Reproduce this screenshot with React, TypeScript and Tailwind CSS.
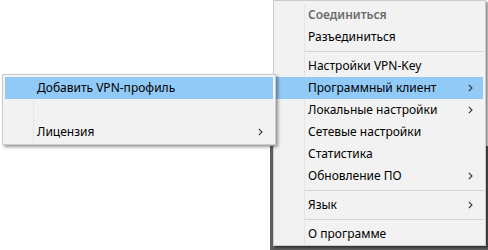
import React from "react";

const Chevron = () => (
  <svg width="5" height="8" viewBox="0 0 5 8" className="block">
    <path d="M0.8 0.8 L4 4 L0.8 7.2" fill="none" stroke="#333" strokeWidth="1.1" />
  </svg>
);

type Item =
  | { kind: "sep" }
  | { kind: "item"; label: string; sub?: boolean; active?: boolean; disabled?: boolean; bold?: boolean };

const mainItems: Item[] = [
  { kind: "item", label: "Соединиться", disabled: true, bold: true },
  { kind: "item", label: "Разъединиться" },
  { kind: "sep" },
  { kind: "item", label: "Настройки VPN-Key" },
  { kind: "item", label: "Программный клиент", sub: true, active: true },
  { kind: "item", label: "Локальные настройки", sub: true },
  { kind: "item", label: "Сетевые настройки" },
  { kind: "item", label: "Статистика" },
  { kind: "item", label: "Обновление ПО", sub: true },
  { kind: "sep" },
  { kind: "item", label: "Язык", sub: true },
  { kind: "sep" },
  { kind: "item", label: "О программе" },
];

const subItems: Item[] = [
  { kind: "item", label: "Добавить VPN-профиль", active: true },
  { kind: "item", label: "" },
  { kind: "item", label: "Лицензия", sub: true },
];

function MenuList({ items }: { items: Item[] }) {
  return (
    <div className="relative flex flex-col">
      <div className="absolute left-[30px] top-0 bottom-0 w-px bg-[#e6e6e6]" />
      {items.map((it, i) =>
        it.kind === "sep" ? (
          <div key={i} className="h-[7px] flex items-center pl-[31px] pr-[1px]">
            <div className="h-px w-full bg-[#d5d5d5]" />
          </div>
        ) : (
          <div
            key={i}
            className={
              "relative h-[22px] mx-[2px] flex items-center pl-[32px] pr-[10px] " +
              (it.active ? "bg-[#91c9f7]" : "")
            }
          >
            <span
              className={
                "flex-1 whitespace-nowrap text-[12px] leading-none " +
                (it.disabled ? "text-[#6d6d6d] " : "text-black ") +
                (it.bold ? "font-semibold" : "")
              }
            >
              {it.label}
            </span>
            {it.sub ? <Chevron /> : null}
          </div>
        )
      )}
    </div>
  );
}

export default function App() {
  return (
    <div
      className="relative w-[488px] h-[250px] bg-white overflow-hidden"
      style={{ fontFamily: '"Noto Sans", "Open Sans", sans-serif' }}
    >
      {/* dark area behind the main menu */}
      <div className="absolute left-[270px] top-[146px] w-[218px] h-[104px] bg-[#5e5e5e]" />
      {/* main menu */}
      <div className="absolute left-[273px] top-0 w-[213px] h-[246px] border border-[#cccccc] bg-[#f2f2f2] pt-[3px] shadow-[2px_2px_2px_rgba(0,0,0,0.45)]">
        <MenuList items={mainItems} />
      </div>
      {/* submenu */}
      <div className="absolute left-[2px] top-[74px] w-[274px] border border-[#cccccc] bg-[#f2f2f2] pt-[2px] pb-[1px] shadow-[2px_2px_3px_rgba(0,0,0,0.4)]">
        <MenuList items={subItems} />
      </div>
    </div>
  );
}
